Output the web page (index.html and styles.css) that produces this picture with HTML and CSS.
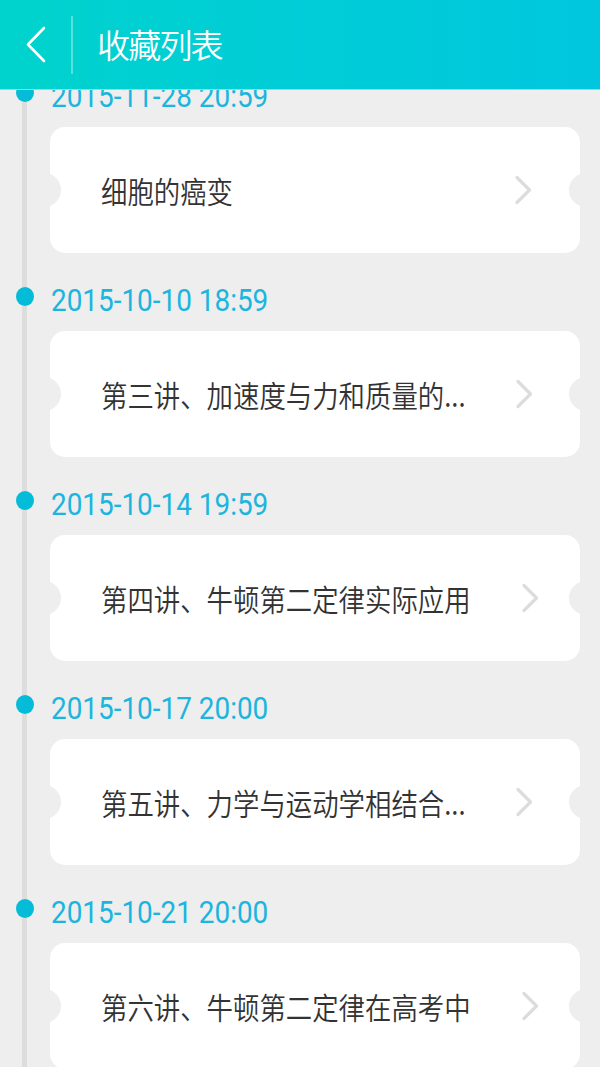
FILE: index.html
```html
<!DOCTYPE html>
<html lang="zh">
<head>
<meta charset="utf-8">
<title>收藏列表</title>
<link rel="stylesheet" href="styles.css">
</head>
<body>
<header class="topbar">
  <button class="back" aria-label="返回">
    <svg width="24" height="40" viewBox="0 0 24 40"><path d="M19 3 L3 19.5 L19 36" fill="none" stroke="#fff" stroke-width="2.6" stroke-linecap="round" stroke-linejoin="round"/></svg>
  </button>
  <span class="divider"></span>
  <h1 class="title">收藏列表</h1>
</header>
<main class="timeline">
  <section class="entry">
    <div class="date"><span class="dot"></span><span class="date-text">2015-11-28 20:59</span></div>
    <div class="card"><span class="card-text">细胞的癌变</span><svg class="chev" width="19" height="30" viewBox="0 0 19 30"><path d="M3 2.5 L15.5 15 L3 27.5" fill="none" stroke="#dcdcdc" stroke-width="3.2" stroke-linecap="round" stroke-linejoin="round"/></svg></div>
  </section>
  <section class="entry">
    <div class="date"><span class="dot"></span><span class="date-text">2015-10-10 18:59</span></div>
    <div class="card"><span class="card-text">第三讲、加速度与力和质量的...</span><svg class="chev" width="19" height="30" viewBox="0 0 19 30"><path d="M3 2.5 L15.5 15 L3 27.5" fill="none" stroke="#dcdcdc" stroke-width="3.2" stroke-linecap="round" stroke-linejoin="round"/></svg></div>
  </section>
  <section class="entry">
    <div class="date"><span class="dot"></span><span class="date-text">2015-10-14 19:59</span></div>
    <div class="card"><span class="card-text">第四讲、牛顿第二定律实际应用</span><svg class="chev" width="19" height="30" viewBox="0 0 19 30"><path d="M3 2.5 L15.5 15 L3 27.5" fill="none" stroke="#dcdcdc" stroke-width="3.2" stroke-linecap="round" stroke-linejoin="round"/></svg></div>
  </section>
  <section class="entry">
    <div class="date"><span class="dot"></span><span class="date-text">2015-10-17 20:00</span></div>
    <div class="card"><span class="card-text">第五讲、力学与运动学相结合...</span><svg class="chev" width="19" height="30" viewBox="0 0 19 30"><path d="M3 2.5 L15.5 15 L3 27.5" fill="none" stroke="#dcdcdc" stroke-width="3.2" stroke-linecap="round" stroke-linejoin="round"/></svg></div>
  </section>
  <section class="entry">
    <div class="date"><span class="dot"></span><span class="date-text">2015-10-21 20:00</span></div>
    <div class="card"><span class="card-text">第六讲、牛顿第二定律在高考中</span><svg class="chev" width="19" height="30" viewBox="0 0 19 30"><path d="M3 2.5 L15.5 15 L3 27.5" fill="none" stroke="#dcdcdc" stroke-width="3.2" stroke-linecap="round" stroke-linejoin="round"/></svg></div>
  </section>
</main>
</body>
</html>
```
FILE: styles.css
```css
html, body {
  margin: 0;
  padding: 0;
}
body {
  background: #eeeeee;
  font-family: "Noto Sans CJK SC", "Roboto", sans-serif;
  width: 600px;
  height: 1067px;
  overflow: hidden;
  position: relative;
}
.topbar {
  position: absolute;
  top: 0;
  left: 0;
  right: 0;
  height: 90px;
  z-index: 5;
  display: flex;
  align-items: center;
  background: linear-gradient(90deg, #00d3cd 0%, #00cdd7 50%, #00c7de 100%);
  border-bottom: 1px solid #7fe0ea;
  box-sizing: border-box;
}
.back {
  background: none;
  border: 0;
  padding: 0;
  margin-left: 25px;
  width: 24px;
  height: 40px;
  display: flex;
}
.divider {
  width: 2px;
  height: 58px;
  margin-left: 22px;
  background: rgba(255, 255, 255, 0.35);
}
.title {
  margin: 0 0 0 24px;
  font-weight: 350;
  color: #fff;
  font-size: 33px;
  letter-spacing: -1.8px;
  line-height: 1;
  font-family: "Noto Sans CJK SC", sans-serif;
}
.timeline {
  position: relative;
  padding: 65px 20px 0 16px;
}
.timeline::before {
  content: "";
  position: absolute;
  left: 22px;
  top: 0;
  width: 5px;
  height: 1100px;
  background: #dddddd;
}
.entry {
  position: relative;
  margin-bottom: 16px;
}
.date {
  height: 62px;
  display: flex;
  align-items: center;
}
.dot {
  width: 18px;
  height: 19px;
  border-radius: 50%;
  background: #05bcd8;
  position: relative;
  margin-top: -8px;
}
.date-text {
  display: inline-block;
  margin-left: 17px;
  font-family: "Roboto", sans-serif;
  font-size: 31px;
  color: #1bb5de;
  transform: scaleX(0.9);
  transform-origin: left center;
  white-space: nowrap;
  line-height: 1;
}
.card {
  position: relative;
  margin-left: 34px;
  height: 126px;
  background: #fff;
  border-radius: 15px;
  display: flex;
  align-items: center;
  overflow: hidden;
}
.card::before,
.card::after {
  content: "";
  position: absolute;
  top: 46px;
  width: 34px;
  height: 34px;
  border-radius: 50%;
  background: #eeeeee;
}
.card::before {
  left: -23px;
}
.card::after {
  right: -23px;
}
.card-text {
  display: inline-block;
  margin-left: 51px;
  font-size: 30px;
  font-weight: 350;
  color: #333333;
  transform: scaleX(0.88);
  transform-origin: left center;
  white-space: nowrap;
  line-height: 1;
  flex: 1;
}
.chev {
  margin-right: 47px;
  flex: none;
}
```
